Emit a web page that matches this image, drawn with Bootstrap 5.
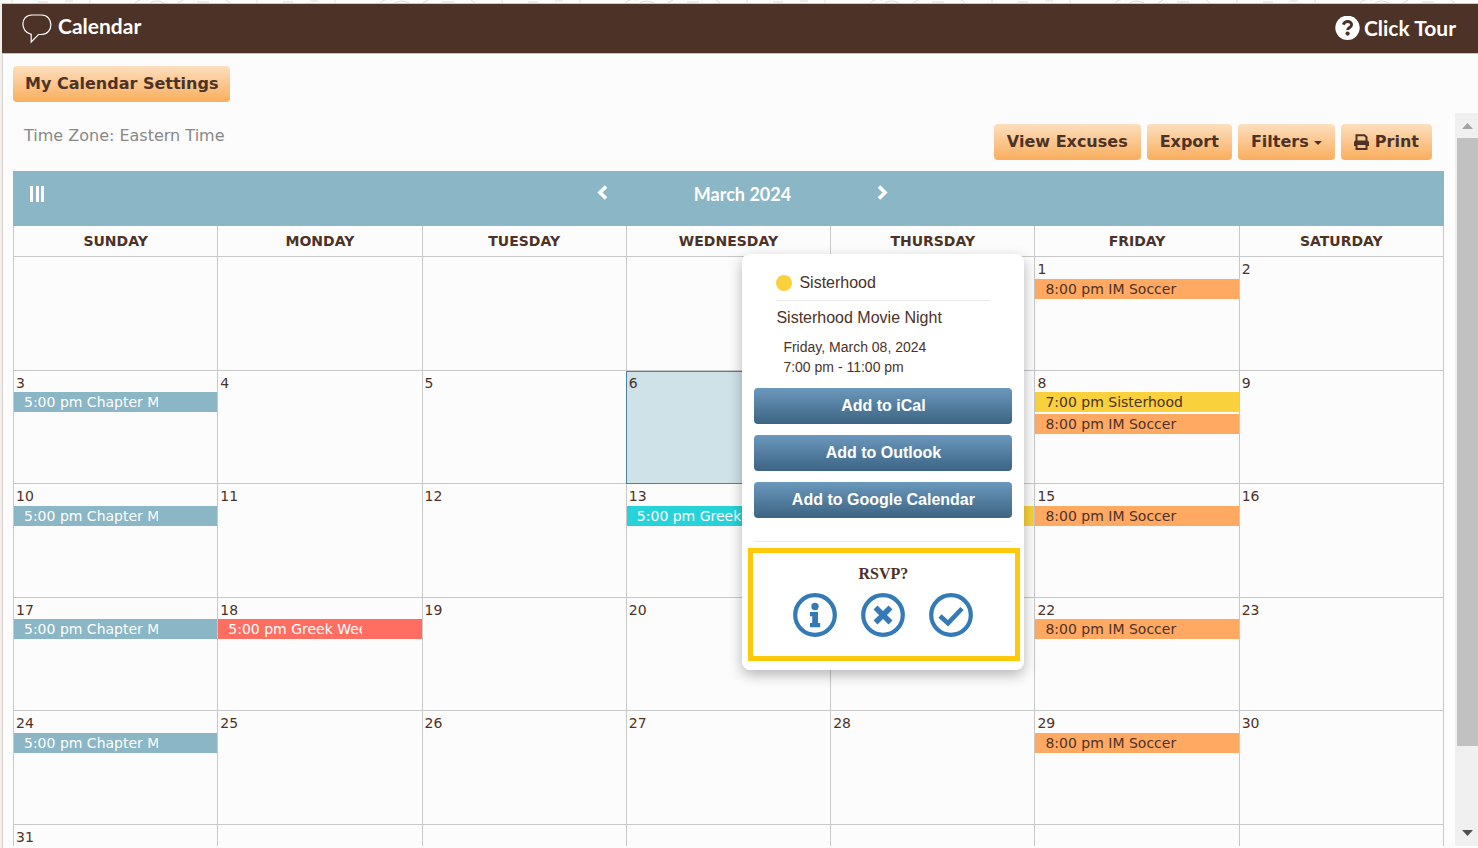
<!DOCTYPE html>
<html lang="en">
<head>
<meta charset="utf-8">
<meta name="viewport" content="width=device-width, initial-scale=1">
<title>Calendar</title>
<link href="https://cdn.jsdelivr.net/npm/bootstrap@5.3.0/dist/css/bootstrap.min.css" rel="stylesheet">
<style>
:root { --brown: #4d3227; --teal: #8ab6c6; --rule: #c8c8c8; }
body { background: #fcfcfc; color: var(--brown); font-family: Verdana, "DejaVu Sans", sans-serif; font-size: 14px; line-height: 20px; }
.doodles { display: block; width: 100%; height: 3px; }
.page-body { min-height: 0; }
.side-strip { width: 2px; background: #f3efed; }
.panel { border-left: 1px solid #d8d4d2; min-width: 0; }
.title-bar { height: 51px; background: var(--brown); border-top: 1px solid #cfc8c4; border-bottom: 1px solid #c9c1bd; color: #fff; font-family: Lato, sans-serif; font-weight: 700; padding: 0 22px 0 20px; margin-left: -1px; }
.title-bar h1 { font-size: 21px; line-height: 24px; font-weight: 700; }
.title-group { padding-top: 10px; gap: 6px; }
.tour-link { font-size: 21px; line-height: 24px; color: #fff; }
.settings-row { padding: 12px 0 0 10px; margin-bottom: 11px; }
.btn-peach, .btn-steel { height: 36px; border: 0; border-radius: 4px; font-weight: 700; font-size: 16px; line-height: 34px; }
.btn-peach { padding: 0 13px; }
.settings-row .btn-peach { padding: 0 12px; }
.btn-steel { padding: 0 14px; }
.btn-peach, .btn-peach:hover { color: var(--brown); background: linear-gradient(#fddfbf, #f9ae5c); }
.btn-steel, .btn-steel:hover { color: #fff; background: linear-gradient(#6b98bd, #3c6483); }
.btn-peach svg { vertical-align: -3px; }
.caret { display: inline-block; border: 4px solid transparent; border-top-color: currentColor; border-bottom: 0; vertical-align: middle; }
.viewport-area { min-height: 0; margin-bottom: 2px; }
.scroll-content { padding: 11px 11px 0 10px; min-width: 0; overflow: hidden; }
.tool-row { margin-bottom: 11px; }
.tools { gap: 6px; padding-right: 12px; }
.zone { color: #888; font-size: 16px; line-height: 24px; padding-left: 11px; }
.month-bar { height: 55px; background: var(--teal); color: #fff; padding: 11px 16px; }
.month-bar button { color: #fff; line-height: 0; }
.view-toggle { margin: 4px 12px 0 0; }
.month-nav { width: 294px; }
.month-nav button { margin-top: 3px; }
.month-nav h2 { font: 700 18px/24px Lato, sans-serif; }
.cal-grid { width: 100%; table-layout: fixed; border-collapse: collapse; }
.cal-grid th, .cal-grid td { border: 1px solid var(--rule); border-top: 0; padding: 0; vertical-align: top; }
.cal-grid th { height: 30px; text-align: center; font-size: 14px; line-height: 30px; }
.cal-grid td { height: 114px; }
.cal-grid tr:nth-child(even) td { height: 113px; }
.day-no { display: block; padding: 3px 2px 0; line-height: 19px; }
.cal-grid tr:nth-child(even) .day-no { line-height: 18px; }
.cal-grid td.is-today { background: #cfe2e8; outline: 1px solid #4a82a6; outline-offset: -1px; }
.event { display: block; height: 20px; margin-bottom: 2px; padding-left: 10px; text-decoration: none; color: var(--brown); }
.event span { display: block; width: 134px; overflow: hidden; white-space: nowrap; }
.event .fits { width: auto; }
.ev-teal { background: var(--teal); color: #fff; }
.ev-orange { background: #ffa963; }
.ev-yellow { background: #f8d13c; }
.ev-cyan { background: #27d3d8; color: #fff; }
.ev-red { background: #ff6e60; color: #fff; }
.has-pop { position: relative; }
.event-pop { position: absolute; right: calc(100% + 11px); top: -117px; width: 282px; height: 416px; background: #fff; border-radius: 8px; box-shadow: 0 5px 14px rgba(0,0,0,.28); padding: 18px 4px 0 6px; font-family: "Liberation Sans", Arial, sans-serif; }
.pop-head { margin: 0 30px 0 28px; font-size: 16px; line-height: 22px; }
.pop-head .kind { gap: 7px; padding-bottom: 6px; border-bottom: 1px solid #ebebeb; }
.event-name { padding-top: 6px; }
.dot { width: 16px; height: 16px; border-radius: 50%; background: #f8d13c; }
.when { margin: 8px 0 11px 35px; line-height: 20px; }
.pop-actions { gap: 11px; margin: 0 8px 0 6px; padding-bottom: 23px; border-bottom: 1px solid #ebebeb; }
.rsvp { border: 5px solid #ffc80a; margin-top: 6px; height: 113px; padding: 10px 2px 0 0; color: #337ab7; }
.rsvp h3 { font: 700 16px/22px "Liberation Serif", serif; color: var(--brown); }
.rsvp button { color: #337ab7; line-height: 0; }
.rsvp-choices { gap: 24px; }
.bar-scroll { width: 23px; background: #f0f0f0; flex: none; padding: 0 0 0 2px; }
.thumb { height: 83%; background: #c1c1c1; }
</style>
</head>
<body>
<div class="vh-100 d-flex flex-column overflow-hidden">
  <svg class="doodles flex-shrink-0" aria-hidden="true"><defs><pattern id="doodle" width="245" height="3" patternUnits="userSpaceOnUse"><path d="M12 0v3M135 3q5-5 12-3M150 3q6-4 14 0M38 2h10M65 1h8M90 0v3M178 3l5-3M197 2h12M226 0l4 3" fill="none" stroke="#e3dcd8"/></pattern></defs><rect width="100%" height="3" fill="url(#doodle)"/></svg>
  <div class="page-body d-flex flex-grow-1">
    <div class="side-strip flex-shrink-0"></div>
    <div class="panel d-flex flex-column flex-grow-1">
      <header class="title-bar d-flex justify-content-between flex-shrink-0">
        <div class="title-group d-flex">
          <svg width="30" height="30" viewBox="0 0 30 30" fill="none" stroke="#fff" stroke-width="1.2" aria-hidden="true"><path d="M10 1h9.500c12.500 0 12.500 19.500 0 19.500H16.500L9.200 28V20.300C-2 18-2 1 10 1Z"/></svg>
          <h1 class="m-0">Calendar</h1>
        </div>
        <a href="#" class="tour-link d-flex text-decoration-none pt-2 mt-1 gap-1">
          <svg width="26" height="26" viewBox="0 0 26 26" aria-hidden="true"><circle cx="13.500" cy="11.800" r="12.200" fill="#fff"/><path d="M9.200 8.700C10.400 6.200 11.700 5.500 13.600 5.500c2.300 0 4 1.400 4 3.300 0 2.700-3.900 2.800-3.900 5.300" fill="none" stroke="#4d3227" stroke-width="2.900"/><circle cx="13.600" cy="17.600" r="2.100" fill="#4d3227"/></svg>
          <span>Click Tour</span>
        </a>
      </header>
      <div class="settings-row flex-shrink-0"><button type="button" class="btn btn-peach">My Calendar Settings</button></div>
      <div class="viewport-area d-flex flex-grow-1">
        <main class="scroll-content flex-grow-1">
          <div class="tool-row d-flex justify-content-between">
            <div class="zone">Time Zone: Eastern Time</div>
            <div class="tools d-flex">
              <button type="button" class="btn btn-peach">View Excuses</button>
              <button type="button" class="btn btn-peach">Export</button>
              <button type="button" class="btn btn-peach">Filters <span class="caret"></span></button>
              <button type="button" class="btn btn-peach"><svg width="15" height="16" viewBox="0 0 15 16" aria-hidden="true"><path d="M2.500 7V1.200h8l2 2V7" fill="none" stroke="#4d3227" stroke-width="2"/><path d="M0 12V8.500Q0 6.500 2 6.500h11q2 0 2 2V12h-2v-2H2v2z" fill="#4d3227"/><path d="M2.500 10v5h10v-5z" fill="none" stroke="#4d3227" stroke-width="2"/></svg> Print</button>
            </div>
          </div>
          <div class="month-bar d-flex">
            <button type="button" class="view-toggle btn p-0 border-0 align-self-start" aria-label="Toggle view"><svg width="16" height="16"><path d="M1 0h3v16H1zM7 0h3v16H7zM12 0h3v16h-3z" fill="#fff"/></svg></button>
            <div class="month-nav d-flex justify-content-between align-items-start mx-auto">
              <button type="button" class="btn p-0 border-0" aria-label="Previous month"><svg width="12" height="15" viewBox="0 0 12 15"><path d="M10 1.500 4 7.500l6 6" fill="none" stroke="#fff" stroke-width="3.600"/></svg></button>
              <h2 class="m-0">March 2024</h2>
              <button type="button" class="btn p-0 border-0" aria-label="Next month"><svg width="12" height="15" viewBox="0 0 12 15"><path d="m2 1.500 6 6-6 6" fill="none" stroke="#fff" stroke-width="3.600"/></svg></button>
            </div>
          </div>
          <table class="cal-grid">
            <thead><tr><th scope="col">SUNDAY</th><th scope="col">MONDAY</th><th scope="col">TUESDAY</th><th scope="col">WEDNESDAY</th><th scope="col">THURSDAY</th><th scope="col">FRIDAY</th><th scope="col">SATURDAY</th></tr></thead>
            <tbody>
              <tr>
                <td></td><td></td><td></td><td></td><td></td>
                <td><span class="day-no">1</span><a href="#" class="event ev-orange"><span>8:00 pm IM Soccer</span></a></td>
                <td><span class="day-no">2</span></td>
              </tr>
              <tr>
                <td><span class="day-no">3</span><a href="#" class="event ev-teal"><span>5:00 pm Chapter Meeting</span></a></td>
                <td><span class="day-no">4</span></td>
                <td><span class="day-no">5</span></td>
                <td class="is-today"><span class="day-no">6</span></td>
                <td></td>
                <td class="has-pop"><span class="day-no">8</span>
                  <a href="#" class="event ev-yellow"><span class="fits">7:00 pm Sisterhood</span></a>
                  <a href="#" class="event ev-orange"><span>8:00 pm IM Soccer</span></a>
                  <div class="event-pop" role="dialog" aria-label="Sisterhood Movie Night">
                    <div class="pop-head">
                      <div class="kind d-flex align-items-center"><span class="dot"></span><span>Sisterhood</span></div>
                      <div class="event-name">Sisterhood Movie Night</div>
                    </div>
                    <div class="when">Friday, March 08, 2024<br>7:00 pm - 11:00 pm</div>
                    <div class="pop-actions d-grid">
                      <button type="button" class="btn btn-steel">Add to iCal</button>
                      <button type="button" class="btn btn-steel">Add to Outlook</button>
                      <button type="button" class="btn btn-steel">Add to Google Calendar</button>
                    </div>
                    <section class="rsvp text-center">
                      <h3 class="mb-2">RSVP?</h3>
                      <div class="rsvp-choices d-flex justify-content-center">
                        <button type="button" class="btn p-0 border-0" aria-label="More information"><svg width="44" height="44" viewBox="0 0 44 44"><circle cx="22" cy="22" r="19.800" fill="none" stroke="currentColor" stroke-width="4.200"/><circle cx="22" cy="13.500" r="3.700" fill="currentColor"/><path d="M17 19h8v11h2.200v4.200H17V30h2.200v-6.800H17z" fill="currentColor"/></svg></button>
                        <button type="button" class="btn p-0 border-0" aria-label="Decline"><svg width="44" height="44" viewBox="0 0 44 44"><circle cx="22" cy="22" r="19.800" fill="none" stroke="currentColor" stroke-width="4.200"/><path d="m14.500 14.500 15 15m0-15-15 15" stroke="currentColor" stroke-width="5.600"/></svg></button>
                        <button type="button" class="btn p-0 border-0" aria-label="Accept"><svg width="44" height="44" viewBox="0 0 44 44"><circle cx="22" cy="22" r="19.800" fill="none" stroke="currentColor" stroke-width="4.200"/><path d="m11 23 8 7.300L33 15.500" fill="none" stroke="currentColor" stroke-width="4.700"/></svg></button>
                      </div>
                    </section>
                  </div>
                </td>
                <td><span class="day-no">9</span></td>
              </tr>
              <tr>
                <td><span class="day-no">10</span><a href="#" class="event ev-teal"><span>5:00 pm Chapter Meeting</span></a></td>
                <td><span class="day-no">11</span></td>
                <td><span class="day-no">12</span></td>
                <td><span class="day-no">13</span><a href="#" class="event ev-cyan"><span>5:00 pm Greek</span></a></td>
                <td><span class="day-no">&nbsp;</span><a href="#" class="event ev-yellow" aria-label="Sisterhood"></a></td>
                <td><span class="day-no">15</span><a href="#" class="event ev-orange"><span>8:00 pm IM Soccer</span></a></td>
                <td><span class="day-no">16</span></td>
              </tr>
              <tr>
                <td><span class="day-no">17</span><a href="#" class="event ev-teal"><span>5:00 pm Chapter Meeting</span></a></td>
                <td><span class="day-no">18</span><a href="#" class="event ev-red"><span>5:00 pm Greek Week</span></a></td>
                <td><span class="day-no">19</span></td>
                <td><span class="day-no">20</span></td>
                <td></td>
                <td><span class="day-no">22</span><a href="#" class="event ev-orange"><span>8:00 pm IM Soccer</span></a></td>
                <td><span class="day-no">23</span></td>
              </tr>
              <tr>
                <td><span class="day-no">24</span><a href="#" class="event ev-teal"><span>5:00 pm Chapter Meeting</span></a></td>
                <td><span class="day-no">25</span></td>
                <td><span class="day-no">26</span></td>
                <td><span class="day-no">27</span></td>
                <td><span class="day-no">28</span></td>
                <td><span class="day-no">29</span><a href="#" class="event ev-orange"><span>8:00 pm IM Soccer</span></a></td>
                <td><span class="day-no">30</span></td>
              </tr>
              <tr><td><span class="day-no">31</span></td><td></td><td></td><td></td><td></td><td></td><td></td></tr>
            </tbody>
          </table>
        </main>
        <div class="bar-scroll d-flex flex-column" aria-hidden="true">
          <svg width="21" height="25" class="flex-shrink-0"><path d="M5 16h11l-5.500-6z" fill="#a3a3a3"/></svg>
          <div class="thumb"></div>
          <svg width="21" height="25" class="mt-auto flex-shrink-0"><path d="M5 9h11l-5.500 6z" fill="#505050"/></svg>
        </div>
      </div>
    </div>
  </div>
</div>
<script src="https://cdn.jsdelivr.net/npm/bootstrap@5.3.0/dist/js/bootstrap.bundle.min.js"></script>
</body>
</html>
